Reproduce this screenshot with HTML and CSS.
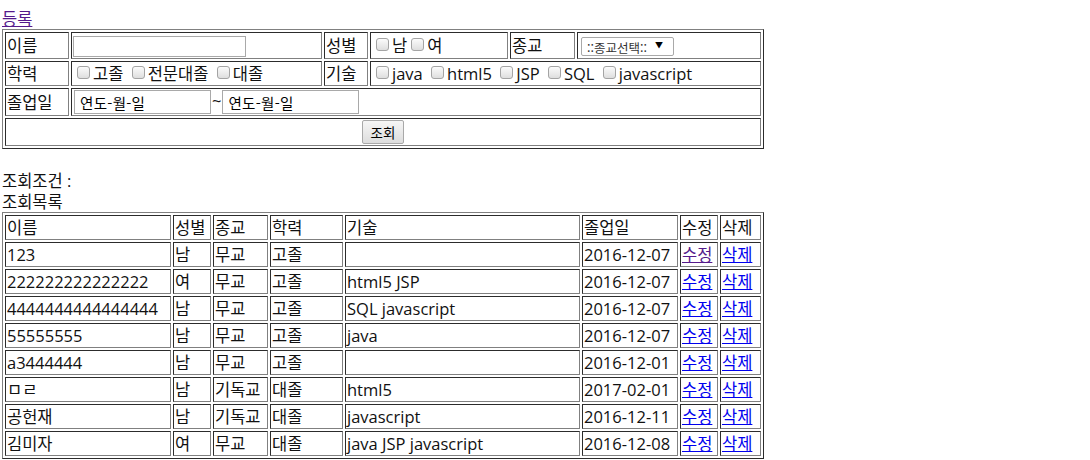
FILE: index.html
```html
<!DOCTYPE html>
<html lang="ko">
<head>
<meta charset="utf-8">
<title>조회</title>
<link rel="stylesheet" href="styles.css">
</head>
<body>
<a href="#" class="link visited">등록</a>
<form class="search">
<table class="grid search-table">
  <colgroup>
    <col class="c-label"><col class="c-name"><col class="c-label2"><col class="c-gender"><col class="c-label3"><col class="c-rel">
  </colgroup>
  <tr>
    <td>이름</td>
    <td><input type="text" class="txt"></td>
    <td>성별</td>
    <td><label><input type="checkbox" class="chk">남</label><label><input type="checkbox" class="chk">여</label></td>
    <td>종교</td>
    <td><span class="sel"><select class="religion"><option>::종교선택::</option></select></span></td>
  </tr>
  <tr>
    <td>학력</td>
    <td><label><input type="checkbox" class="chk">고졸</label> <label><input type="checkbox" class="chk">전문대졸</label> <label><input type="checkbox" class="chk">대졸</label></td>
    <td>기술</td>
    <td colspan="3"><label><input type="checkbox" class="chk">java</label> <label><input type="checkbox" class="chk">html5</label> <label><input type="checkbox" class="chk">JSP</label> <label><input type="checkbox" class="chk">SQL</label> <label><input type="checkbox" class="chk">javascript</label></td>
  </tr>
  <tr>
    <td>졸업일</td>
    <td colspan="5"><input type="text" class="date" value="연도-월-일" readonly>~<input type="text" class="date" value="연도-월-일" readonly></td>
  </tr>
  <tr>
    <td colspan="6" class="center"><button type="button" class="btn">조회</button></td>
  </tr>
</table>
</form>
<br>
<div>조회조건 :</div>
<div>조회목록</div>
<table class="grid list-table">
  <colgroup>
    <col class="l-name"><col class="l-gender"><col class="l-rel"><col class="l-edu"><col class="l-skill"><col class="l-date"><col class="l-edit"><col class="l-del">
  </colgroup>
  <tr><td>이름</td><td>성별</td><td>종교</td><td>학력</td><td>기술</td><td>졸업일</td><td>수정</td><td>삭제</td></tr>
  <tr><td>123</td><td>남</td><td>무교</td><td>고졸</td><td></td><td>2016-12-07</td><td><a href="#" class="link visited">수정</a></td><td><a href="#" class="link">삭제</a></td></tr>
  <tr><td>222222222222222</td><td>여</td><td>무교</td><td>고졸</td><td>html5 JSP</td><td>2016-12-07</td><td><a href="#" class="link">수정</a></td><td><a href="#" class="link">삭제</a></td></tr>
  <tr><td>4444444444444444</td><td>남</td><td>무교</td><td>고졸</td><td>SQL javascript</td><td>2016-12-07</td><td><a href="#" class="link">수정</a></td><td><a href="#" class="link">삭제</a></td></tr>
  <tr><td>55555555</td><td>남</td><td>무교</td><td>고졸</td><td>java</td><td>2016-12-07</td><td><a href="#" class="link">수정</a></td><td><a href="#" class="link">삭제</a></td></tr>
  <tr><td>a3444444</td><td>남</td><td>무교</td><td>고졸</td><td></td><td>2016-12-01</td><td><a href="#" class="link">수정</a></td><td><a href="#" class="link">삭제</a></td></tr>
  <tr><td>ㅁㄹ</td><td>남</td><td>기독교</td><td>대졸</td><td>html5</td><td>2017-02-01</td><td><a href="#" class="link">수정</a></td><td><a href="#" class="link">삭제</a></td></tr>
  <tr><td>공헌재</td><td>남</td><td>기독교</td><td>대졸</td><td>javascript</td><td>2016-12-11</td><td><a href="#" class="link">수정</a></td><td><a href="#" class="link">삭제</a></td></tr>
  <tr><td>김미자</td><td>여</td><td>무교</td><td>대졸</td><td>java JSP javascript</td><td>2016-12-08</td><td><a href="#" class="link">수정</a></td><td><a href="#" class="link">삭제</a></td></tr>
</table>
</body>
</html>
```
FILE: styles.css
```css
body {
  margin: 8px 2px;
  font-family: "Open Sans", "Noto Sans CJK KR", sans-serif;
  font-size: 16.5px;
  line-height: 21px;
  color: #111;
  background: #fff;
}
.link { color: #0000ee; text-decoration: underline; }
.link.visited { color: #551a8b; }
.search { margin: 0; }

.grid {
  width: 762px;
  table-layout: fixed;
  border: 1px outset #808080;
  border-spacing: 2px;
}
.grid td {
  border: 1px inset #808080;
  padding: 1px;
  height: 21px;
  white-space: nowrap;
  overflow: hidden;
  vertical-align: middle;
}
.center { text-align: center; }

.c-label { width: 64px; }
.c-name { width: 251px; }
.c-label2 { width: 44px; }
.c-gender { width: 138px; }
.c-label3 { width: 65px; }
.c-rel { width: 184px; }

.l-name { width: 166px; }
.l-gender { width: 38px; }
.l-rel { width: 55px; }
.l-edu { width: 73px; }
.l-skill { width: 235px; }
.l-date { width: 96px; }
.l-edit { width: 38px; }
.l-del { width: 41px; }

.txt, .date, .btn, .religion, .sel {
  vertical-align: top;
}
.txt {
  box-sizing: border-box;
  width: 173px;
  height: 21px;
  margin: 2px 0 0 0;
  border: 1px solid #a9a9a9;
  padding: 1px 2px;
  font: 13px "Open Sans", "Noto Sans CJK KR", sans-serif;
}
.chk {
  -webkit-appearance: none;
  appearance: none;
  box-sizing: border-box;
  width: 13px;
  height: 13px;
  margin: 3px 3px 3px 4px;
  border: 1px solid #a4a4a4;
  border-radius: 3px;
  background: linear-gradient(#fbfbfb, #dedede);
  vertical-align: -2px;
}
.sel {
  position: relative;
  display: inline-block;
  margin: 2px 0 0 2px;
}
.religion {
  -webkit-appearance: none;
  appearance: none;
  box-sizing: border-box;
  display: block;
  width: 93px;
  height: 19px;
  border: 1px solid #a9a9a9;
  border-radius: 2px;
  background: #fff;
  padding: 0 0 0 5px;
  font: 12.5px "Noto Sans CJK KR", sans-serif;
  color: #333;
}
.sel::after {
  content: "▼";
  position: absolute;
  right: 11px;
  top: 3px;
  font-size: 8px;
  line-height: 10px;
  color: #000;
  pointer-events: none;
}
.date {
  box-sizing: border-box;
  width: 137px;
  height: 24px;
  margin: 0 1px;
  border: 1px solid #a9a9a9;
  padding: 1px 5px;
  font: 14.5px "Noto Sans CJK KR", sans-serif;
  letter-spacing: 0.3px;
}
.btn {
  box-sizing: border-box;
  width: 42px;
  height: 24px;
  margin: 0;
  border: 1px solid #a9a9a9;
  border-radius: 2px;
  background: linear-gradient(#f6f6f6, #dddddd);
  font: 13.5px "Noto Sans CJK KR", sans-serif;
  color: #000;
  padding: 0;
}
```
